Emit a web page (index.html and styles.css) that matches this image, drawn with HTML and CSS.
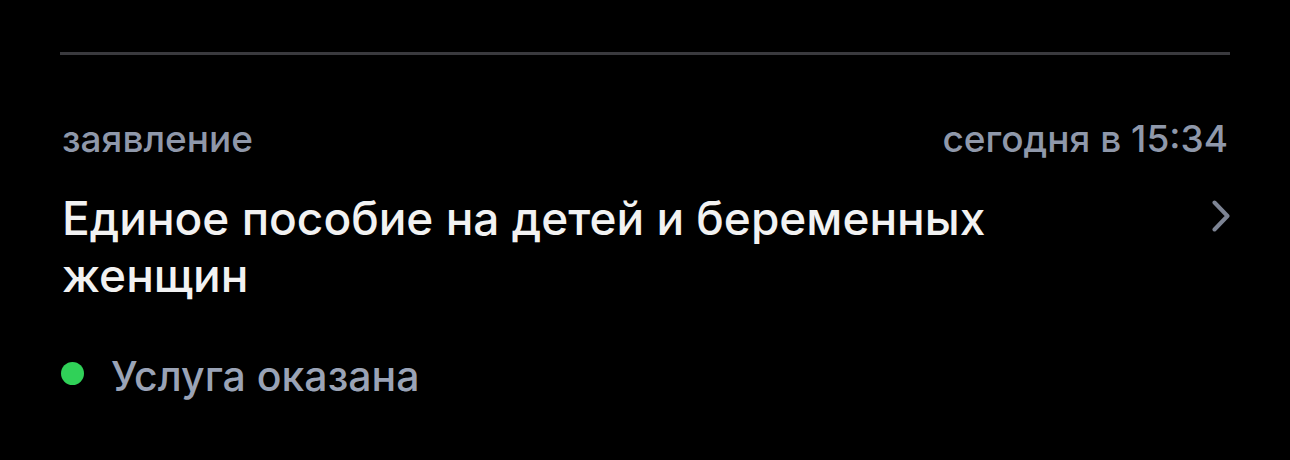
FILE: index.html
```html
<!DOCTYPE html>
<html lang="ru">
<head>
<meta charset="utf-8">
<link rel="stylesheet" href="styles.css">
</head>
<body>
<div class="card">
  <div class="divider"></div>
  <div class="meta">
    <span class="kind">заявление</span>
    <span class="date">сегодня в 15:34</span>
  </div>
  <div class="title-row">
    <div class="title">Единое пособие на детей и беременных женщин</div>
    <svg class="chevron" width="18" height="32" viewBox="0 0 18 32"><path d="M2.5 2.5 L15.5 16 L2.5 29.5" fill="none" stroke="#7d8494" stroke-width="4" stroke-linecap="round" stroke-linejoin="round"/></svg>
  </div>
  <div class="status">
    <span class="dot"></span>
    <span class="status-text">Услуга оказана</span>
  </div>
</div>
</body>
</html>
```
FILE: styles.css
```css
html, body {
  margin: 0;
  background: #000;
}
body {
  width: 1290px;
  height: 460px;
  overflow: hidden;
  font-family: Inter, "Noto Sans", sans-serif;
}
.card {
  padding: 52px 60px 0 60px;
}
.divider {
  height: 3px;
  background: #3a3a3e;
}
.meta {
  display: flex;
  justify-content: space-between;
  align-items: baseline;
  margin-top: 62px;
  color: #8f98aa;
  font-size: 37px;
  font-weight: 500;
  line-height: 44px;
  padding: 0 2px;
}
.title-row {
  display: flex;
  justify-content: space-between;
  align-items: flex-start;
  margin-top: 29px;
}
.title {
  width: 1000px;
  color: #f2f2f2;
  font-size: 46px;
  font-weight: 500;
  line-height: 57px;
  padding-left: 2px;
}
.chevron {
  margin-top: 10px;
}
.status {
  display: flex;
  align-items: center;
  margin-top: 48px;
}
.dot {
  width: 23px;
  height: 23px;
  border-radius: 50%;
  background: #30d158;
  margin-left: 1px;
  margin-right: 27px;
  margin-bottom: 5px;
}
.status-text {
  color: #9aa3b6;
  font-size: 41px;
  font-weight: 500;
  line-height: 48px;
}
```
